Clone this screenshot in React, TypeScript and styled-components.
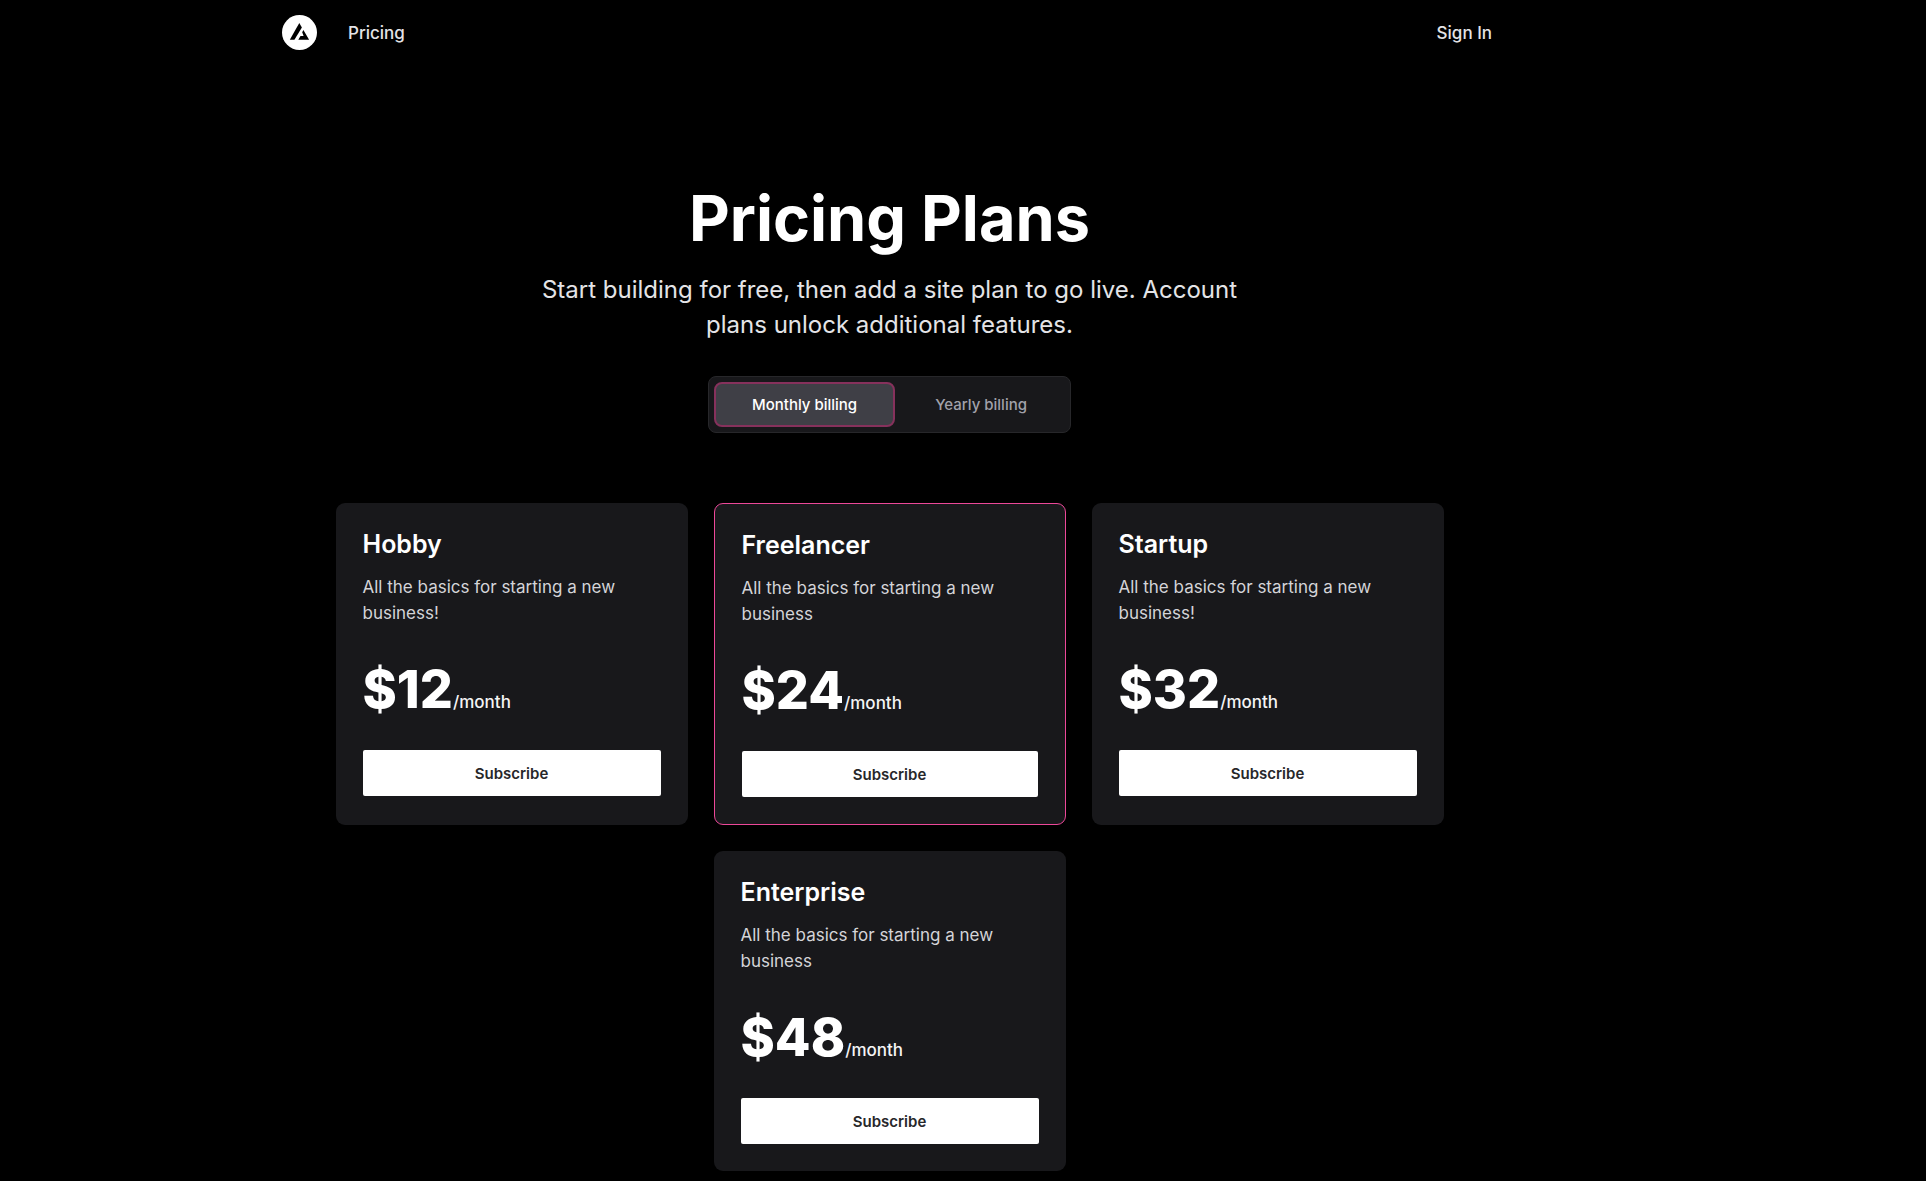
import React, { useState } from "react";
import styled, { createGlobalStyle, css } from "styled-components";

const GlobalStyle = createGlobalStyle`
  *, *::before, *::after { box-sizing: border-box; }
  body {
    margin: 0;
    background: #000;
    color: #fff;
    font-family: Inter, "Liberation Sans", sans-serif;
    -webkit-font-smoothing: antialiased;
  }
  h1, h2, p { margin: 0; }
  button { font-family: inherit; cursor: pointer; }
`;

const Page = styled.div`
  padding: 0 147px 10px 0;
`;

const Header = styled.header`
  max-width: 1267px;
  margin: 0 auto;
  padding: 15px 31px 15px 26px;
  display: flex;
  align-items: center;
  justify-content: space-between;
`;

const Nav = styled.nav`
  display: flex;
  align-items: center;
  gap: 31px;
`;

const NavLink = styled.a`
  color: #e4e4e7;
  font-size: 17px;
  line-height: 26px;
  font-weight: 500;
  text-decoration: none;
`;

const LogoLink = styled.a`
  display: flex;
`;

const Main = styled.main`
  max-width: 1162px;
  margin: 0 auto;
  padding: 117px 26px 0;
  display: flex;
  flex-direction: column;
  align-items: center;
`;

const Title = styled.h1`
  font-size: 63px;
  line-height: 72px;
  font-weight: 700;
  text-align: center;
`;

const Lead = styled.p`
  max-width: 704px;
  margin-top: 18px;
  color: #e4e4e7;
  font-size: 24px;
  line-height: 35px;
  text-align: center;
`;

const BillingToggle = styled.div`
  margin-top: 34px;
  padding: 5px;
  display: flex;
  gap: 2px;
  background: #18181b;
  border: 1px solid #27272a;
  border-radius: 8px;
`;

const ToggleButton = styled.button<{ $active: boolean }>`
  height: 45px;
  padding: 0 36px;
  border: 2px solid transparent;
  border-radius: 8px;
  background: transparent;
  color: #a1a1aa;
  font-size: 15px;
  font-weight: 500;
  ${(p) =>
    p.$active &&
    css`
      background: #3f3f46;
      border-color: #86315c;
      color: #fff;
    `}
`;

const Plans = styled.section`
  width: 100%;
  margin-top: 70px;
  display: flex;
  flex-wrap: wrap;
  justify-content: center;
  gap: 26px;
`;

const Card = styled.article<{ $featured?: boolean }>`
  flex: 0 1 352px;
  padding: 27px;
  background: #18181b;
  border-radius: 9px;
  ${(p) =>
    p.$featured &&
    css`
      border: 1px solid #ec4899;
    `}
`;

const PlanName = styled.h2`
  font-size: 25px;
  line-height: 28px;
  font-weight: 600;
`;

const PlanText = styled.p`
  margin-top: 16px;
  color: #d4d4d8;
  font-size: 17px;
  line-height: 26px;
`;

const Price = styled.p`
  margin-top: 37px;
  display: flex;
  align-items: baseline;
`;

const Amount = styled.span`
  font-size: 52px;
  line-height: 53px;
  font-weight: 800;
`;

const Period = styled.span`
  color: #f4f4f5;
  font-size: 17px;
  line-height: 17px;
  font-weight: 500;
`;

const SubscribeButton = styled.button`
  width: 100%;
  height: 46px;
  margin-top: 34px;
  padding: 0;
  border: 0;
  border-radius: 2px;
  background: #fff;
  color: #27272a;
  font-size: 15px;
  font-weight: 600;
`;

const Logo = () => (
  <svg width="35" height="35" viewBox="0 0 35 35" aria-hidden="true">
    <circle cx="17.5" cy="17.5" r="17.5" fill="#fff" />
    <path d="M17.3 8 L19.9 12.4 L12.4 24.8 H7.8 Z" fill="#000" />
    <path d="M21.4 15 L27.1 24.8 H16.3 L18.5 21 H21.6 L20.2 17.2 Z" fill="#000" />
  </svg>
);

const plans = [
  { name: "Hobby", text: "All the basics for starting a new business!", price: 12 },
  { name: "Freelancer", text: "All the basics for starting a new business", price: 24, featured: true },
  { name: "Startup", text: "All the basics for starting a new business!", price: 32 },
  { name: "Enterprise", text: "All the basics for starting a new business", price: 48 },
];

export default function App() {
  const [billing, setBilling] = useState("month");
  return (
    <Page>
      <GlobalStyle />
      <Header>
        <Nav>
          <LogoLink href="#" aria-label="Home">
            <Logo />
          </LogoLink>
          <NavLink href="#pricing">Pricing</NavLink>
        </Nav>
        <NavLink href="#signin">Sign In</NavLink>
      </Header>
      <Main>
        <Title>Pricing Plans</Title>
        <Lead>
          Start building for free, then add a site plan to go live. Account plans unlock additional
          features.
        </Lead>
        <BillingToggle>
          <ToggleButton type="button" $active={billing === "month"} onClick={() => setBilling("month")}>
            Monthly billing
          </ToggleButton>
          <ToggleButton type="button" $active={billing === "year"} onClick={() => setBilling("year")}>
            Yearly billing
          </ToggleButton>
        </BillingToggle>
        <Plans>
          {plans.map((plan) => (
            <Card key={plan.name} $featured={plan.featured}>
              <PlanName>{plan.name}</PlanName>
              <PlanText>{plan.text}</PlanText>
              <Price>
                <Amount>${plan.price}</Amount>
                <Period>/month</Period>
              </Price>
              <SubscribeButton type="button">Subscribe</SubscribeButton>
            </Card>
          ))}
        </Plans>
      </Main>
    </Page>
  );
}
